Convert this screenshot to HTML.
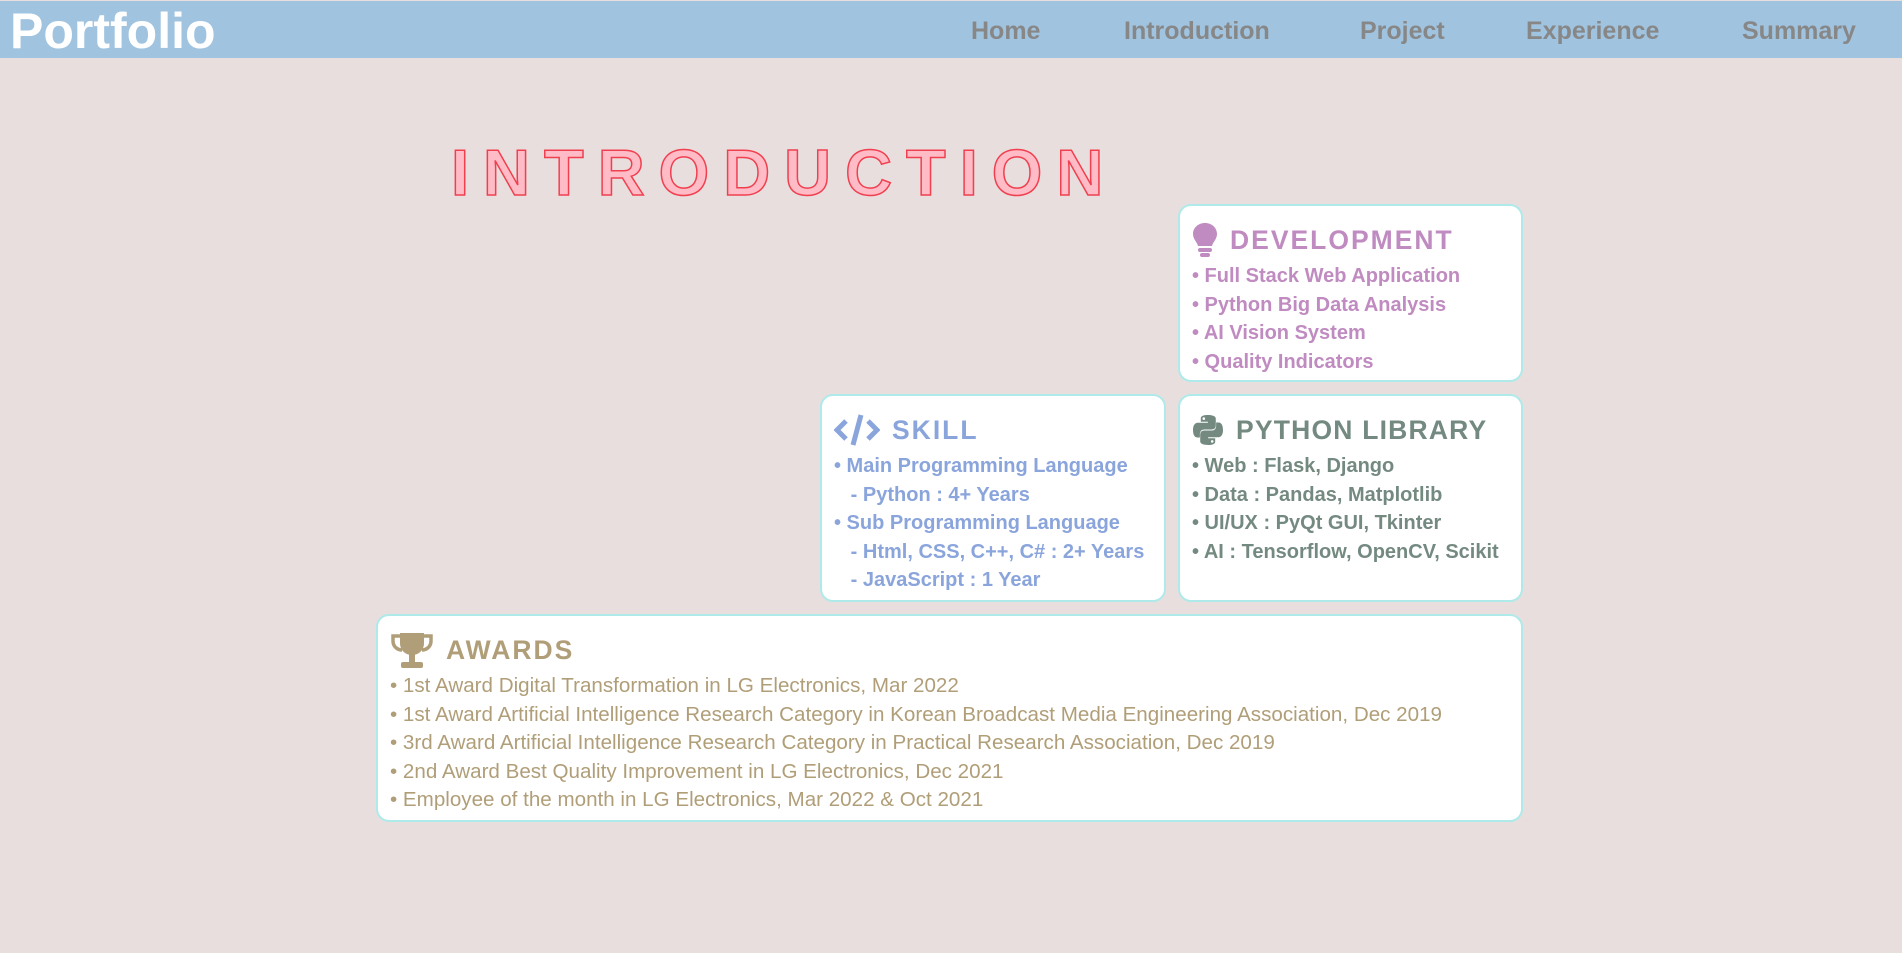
<!DOCTYPE html>
<html><head><meta charset="utf-8"><style>
*{margin:0;padding:0;box-sizing:border-box}
body{width:1902px;height:953px;background:#e9dede;font-family:"Liberation Sans",sans-serif;position:relative;overflow:hidden}
.nav{position:absolute;left:0;top:1px;width:1902px;height:57px;background:#a0c3df}
.logo{position:absolute;left:10px;top:3px;font-size:50px;font-weight:bold;color:#fff;line-height:54px}
.nav a{position:absolute;top:15px;font-size:25px;font-weight:bold;color:#878787;text-decoration:none;line-height:30px}
.title{position:absolute;left:451px;top:137px;font-size:65px;font-weight:bold;letter-spacing:14px;color:#ffbcc6;-webkit-text-stroke:1.5px #f04050;line-height:72px}
.box{position:absolute;background:#fff;border:2px solid #aeeaea;border-radius:13px;padding:12px 0 0 12px}
.h{display:flex;align-items:center;height:44px;font-size:26.5px;font-weight:bold;letter-spacing:2px}
.h svg{margin-right:12px}
.li{font-size:20px;font-weight:bold;line-height:28.6px;white-space:nowrap}
.aw .li{font-weight:normal;font-size:20.6px}
</style></head><body>
<div class="nav"><div class="logo">Portfolio</div>
<a style="left:971px">Home</a><a style="left:1124px">Introduction</a><a style="left:1360px">Project</a><a style="left:1526px">Experience</a><a style="left:1742px">Summary</a></div>
<div class="title">INTRODUCTION</div>

<div class="box" style="left:1178px;top:204px;width:345px;height:178px;color:#c08bc0">
<div class="h"><svg width="26" height="36" viewBox="0 0 26 36"><path d="M13 1C6 1 1 6 1 12c0 5 4 8 5 12h14c1-4 5-7 5-12C25 6 20 1 13 1z" fill="#c08bc0"/><rect x="6" y="26" width="14" height="4" rx="2" fill="#c08bc0"/><rect x="8" y="31" width="10" height="4" rx="2" fill="#c08bc0"/></svg>DEVELOPMENT</div>
<div class="li">• Full Stack Web Application</div><div class="li">• Python Big Data Analysis</div><div class="li">• AI Vision System</div><div class="li">• Quality Indicators</div></div>

<div class="box" style="left:820px;top:394px;width:346px;height:208px;color:#8aa4dc">
<div class="h"><svg width="46" height="36" viewBox="0 0 46 36"><path d="M12 9L3 18l9 9M34 9l9 9-9 9" fill="none" stroke="#8aa4dc" stroke-width="5"/><path d="M27 3L19 33" stroke="#8aa4dc" stroke-width="5"/></svg>SKILL</div>
<div class="li">• Main Programming Language</div><div class="li">&nbsp;&nbsp;&nbsp;- Python : 4+ Years</div><div class="li">• Sub Programming Language</div><div class="li">&nbsp;&nbsp;&nbsp;- Html, CSS, C++, C# : 2+ Years</div><div class="li">&nbsp;&nbsp;&nbsp;- JavaScript : 1 Year</div></div>

<div class="box" style="left:1178px;top:394px;width:345px;height:208px;color:#748a80">
<div class="h"><svg width="32" height="32" viewBox="0 0 32 32"><path d="M15.8 1c-7.5 0-7 3.3-7 3.3v3.4h7.1v1H6s-5-.5-5 7.3 4.3 7.5 4.3 7.5h2.6v-3.6s-.1-4.4 4.4-4.4h7.3s4.2.1 4.2-4V4.7S24.4 1 15.8 1zm-4 2.3a1.3 1.3 0 110 2.6 1.3 1.3 0 010-2.6z" fill="#748a80"/><path d="M16.2 31c7.5 0 7-3.3 7-3.3v-3.4h-7.1v-1H26s5 .5 5-7.3-4.3-7.5-4.3-7.5h-2.6v3.6s.1 4.4-4.4 4.4h-7.3s-4.2-.1-4.2 4v6.8S7.6 31 16.2 31zm4-2.3a1.3 1.3 0 110-2.6 1.3 1.3 0 010 2.6z" fill="#748a80"/></svg><span style="letter-spacing:1.2px">PYTHON LIBRARY</span></div>
<div class="li">• Web : Flask, Django</div><div class="li">• Data : Pandas, Matplotlib</div><div class="li">• UI/UX : PyQt GUI, Tkinter</div><div class="li">• AI : Tensorflow, OpenCV, Scikit</div></div>

<div class="box aw" style="left:376px;top:614px;width:1147px;height:208px;color:#b09e78">
<div class="h"><svg width="44" height="38" viewBox="0 0 44 38"><path d="M10 2h24v10c0 7-5 12-12 12S10 19 10 12z" fill="#b09e78"/><path d="M10 5H3v5c0 6 5 9 9 9M34 5h7v5c0 6-5 9-9 9" fill="none" stroke="#b09e78" stroke-width="3.5"/><rect x="19" y="23" width="6" height="8" fill="#b09e78"/><rect x="11" y="31" width="22" height="6" rx="2" fill="#b09e78"/></svg>AWARDS</div>
<div class="li">• 1st Award Digital Transformation in LG Electronics, Mar 2022</div>
<div class="li">• 1st Award Artificial Intelligence Research Category in Korean Broadcast Media Engineering Association, Dec 2019</div>
<div class="li">• 3rd Award Artificial Intelligence Research Category in Practical Research Association, Dec 2019</div>
<div class="li">• 2nd Award Best Quality Improvement in LG Electronics, Dec 2021</div>
<div class="li">• Employee of the month in LG Electronics, Mar 2022 &amp; Oct 2021</div></div>
</body></html>
